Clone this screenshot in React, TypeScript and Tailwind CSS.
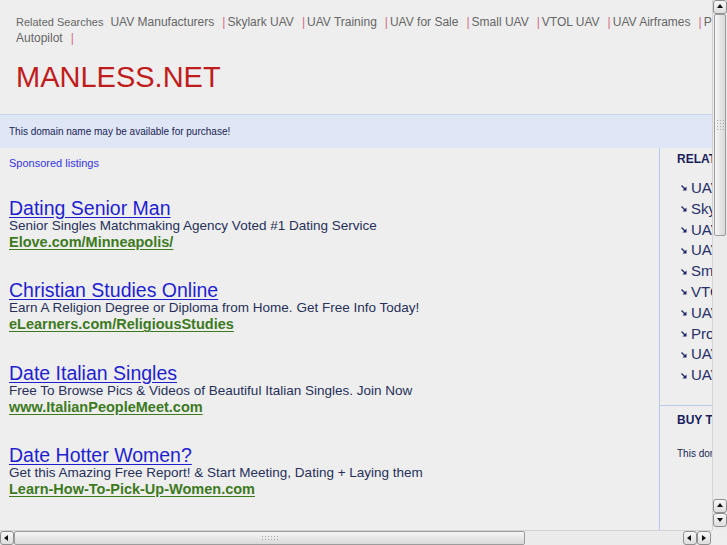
import React from "react";

const related = [
  "UAV Manufacturers",
  "Skylark UAV",
  "UAV Training",
  "UAV for Sale",
  "Small UAV",
  "VTOL UAV",
  "UAV Airframes",
  "Procerus UAV",
];

const sideLinks = [
  "UAV Manufacturers",
  "Skylark UAV",
  "UAV Training",
  "UAV for Sale",
  "Small UAV",
  "VTOL UAV",
  "UAV Airframes",
  "Procerus UAV Autopilot",
  "UAV Autopilot",
  "UAV Cameras",
];

const ads = [
  {
    title: "Dating Senior Man",
    desc: "Senior Singles Matchmaking Agency Voted #1 Dating Service",
    url: "Elove.com/Minneapolis/",
  },
  {
    title: "Christian Studies Online",
    desc: "Earn A Religion Degree or Diploma from Home. Get Free Info Today!",
    url: "eLearners.com/ReligiousStudies",
  },
  {
    title: "Date Italian Singles",
    desc: "Free To Browse Pics & Videos of Beautiful Italian Singles. Join Now",
    url: "www.ItalianPeopleMeet.com",
  },
  {
    title: "Date Hotter Women?",
    desc: "Get this Amazing Free Report! & Start Meeting, Dating + Laying them",
    url: "Learn-How-To-Pick-Up-Women.com",
  },
];

function Arrow({ dir }: { dir: "up" | "down" | "left" | "right" }) {
  const pts = {
    up: "1,5 4,1 7,5",
    down: "1,2 4,6 7,2",
    left: "5,1 1,4 5,7",
    right: "2,1 6,4 2,7",
  }[dir];
  return (
    <svg width="8" height="8" viewBox="0 0 8 8">
      <polygon points={pts} fill="#111" />
    </svg>
  );
}

function SbButton({ dir }: { dir: "up" | "down" | "left" | "right" }) {
  return (
    <div className="w-[14px] h-[14px] shrink-0 flex items-center justify-center rounded-[3px] border border-[#8f8f8f] bg-gradient-to-b from-[#f7f7f7] to-[#dedede]">
      <Arrow dir={dir} />
    </div>
  );
}

function Grip({ vertical }: { vertical: boolean }) {
  const dots = Array.from({ length: 12 });
  return (
    <div
      className={
        vertical
          ? "grid grid-cols-3 gap-[2px]"
          : "grid grid-cols-6 gap-[2px]"
      }
    >
      {dots.map((_, i) => (
        <div key={i} className="w-[1px] h-[1px] bg-[#a8a8a8]" />
      ))}
    </div>
  );
}

function SideArrow() {
  return (
    <svg width="6" height="6" viewBox="0 0 6 6" className="shrink-0">
      <path d="M0.5 0.5 L4 4" stroke="#1d2566" strokeWidth="1.2" />
      <polygon points="5.5,1.5 5.5,5.5 1.5,5.5" fill="#1d2566" />
    </svg>
  );
}

export default function App() {
  return (
    <div className="w-[727px] h-[545px] grid grid-cols-[712px_15px] grid-rows-[530px_15px] bg-[#eeeeee] overflow-hidden font-['Liberation_Sans',Arial,sans-serif]">
      {/* page viewport */}
      <div className="overflow-hidden">
        <div className="w-[800px] min-h-[530px] flex flex-col">
          {/* header */}
          <div className="pl-4 pt-[13px]">
            <div className="whitespace-nowrap leading-4 text-[#666]">
              <span className="text-[11px] mr-[7px]">Related Searches</span>
              {related.map((r, i) => (
                <span key={r} className="text-[12px]">
                  {i > 0 && (
                    <span className="text-[#d06b85] ml-[8px] mr-[2px]">|</span>
                  )}
                  {r}
                </span>
              ))}
            </div>
            <div className="leading-4 text-[12px] text-[#666]">
              Autopilot<span className="text-[#d06b85] ml-[8px]">|</span>
            </div>
            <div className="mt-[14px] mb-[20px] text-[29px] leading-[34px] text-[#c01c1c]">
              MANLESS.NET
            </div>
          </div>

          {/* notice band */}
          <div className="h-[34px] border-t border-[#c7d2e9] bg-[#dfe6f5] pl-[9px] flex items-center text-[10px] text-[#1b2458]">
            This domain name may be available for purchase!
          </div>

          {/* body */}
          <div className="flex flex-1">
            <div className="w-[659px] pl-[9px] pt-[8px]">
              <div className="text-[11px] leading-[14px] text-[#3434e0]">
                Sponsored listings
              </div>
              <div className="mt-[28px] flex flex-col gap-[30.4px]">
                {ads.map((ad) => (
                  <div key={ad.title}>
                    <div className="text-[19.5px] leading-[20px] text-[#1f1fd0] underline underline-offset-2">
                      {ad.title}
                    </div>
                    <div className="text-[13.5px] leading-[16px] text-[#27305a] whitespace-nowrap">
                      {ad.desc}
                    </div>
                    <div className="text-[14.5px] leading-[16px] font-bold text-[#3d7a1e] underline underline-offset-2">
                      {ad.url}
                    </div>
                  </div>
                ))}
              </div>
            </div>

            {/* sidebar */}
            <div className="w-[141px] border-l border-[#b9cbea] whitespace-nowrap">
              <div className="pl-[17px] pt-[4px] pb-[19px]">
                <div className="text-[12px] leading-[14px] font-bold text-[#1a1f5c]">
                  RELATED SEARCHES
                </div>
                <div className="mt-[12px] pl-[4px]">
                  {sideLinks.map((s) => (
                    <div
                      key={s}
                      className="flex items-center gap-[4px] leading-[20.8px] text-[15px] text-[#27306a]"
                    >
                      <SideArrow />
                      {s}
                    </div>
                  ))}
                </div>
              </div>
              <div className="border-t border-[#b9cbea] pl-[17px] pt-[7px]">
                <div className="text-[12px] leading-[14px] font-bold text-[#1a1f5c]">
                  BUY THIS DOMAIN
                </div>
                <div className="mt-[21px] text-[10px] leading-[12px] text-[#1b2458]">
                  This domain may be for sale.
                </div>
              </div>
            </div>
          </div>
        </div>
      </div>

      {/* vertical scrollbar */}
      <div className="flex flex-col bg-[#ebebeb] border-l border-[#d4d4d4]">
        <SbButton dir="up" />
        <div className="h-[222px] mx-[1px] rounded-[2px] border border-[#9c9c9c] bg-gradient-to-r from-[#f6f6f6] to-[#d9d9d9] flex items-center justify-center">
          <Grip vertical />
        </div>
        <div className="flex-1" />
        <SbButton dir="up" />
        <SbButton dir="down" />
        <div className="h-[3px]" />
      </div>

      {/* horizontal scrollbar */}
      <div className="flex bg-[#ebebeb] border-t border-[#d4d4d4]">
        <SbButton dir="left" />
        <div className="w-[511px] rounded-[2px] border border-[#9c9c9c] bg-gradient-to-b from-[#f6f6f6] to-[#d9d9d9] flex items-center justify-center">
          <Grip vertical={false} />
        </div>
        <div className="flex-1" />
        <SbButton dir="left" />
        <SbButton dir="right" />
        <div className="w-[1px]" />
      </div>

      <div className="bg-[#eeeeee]" />
    </div>
  );
}
